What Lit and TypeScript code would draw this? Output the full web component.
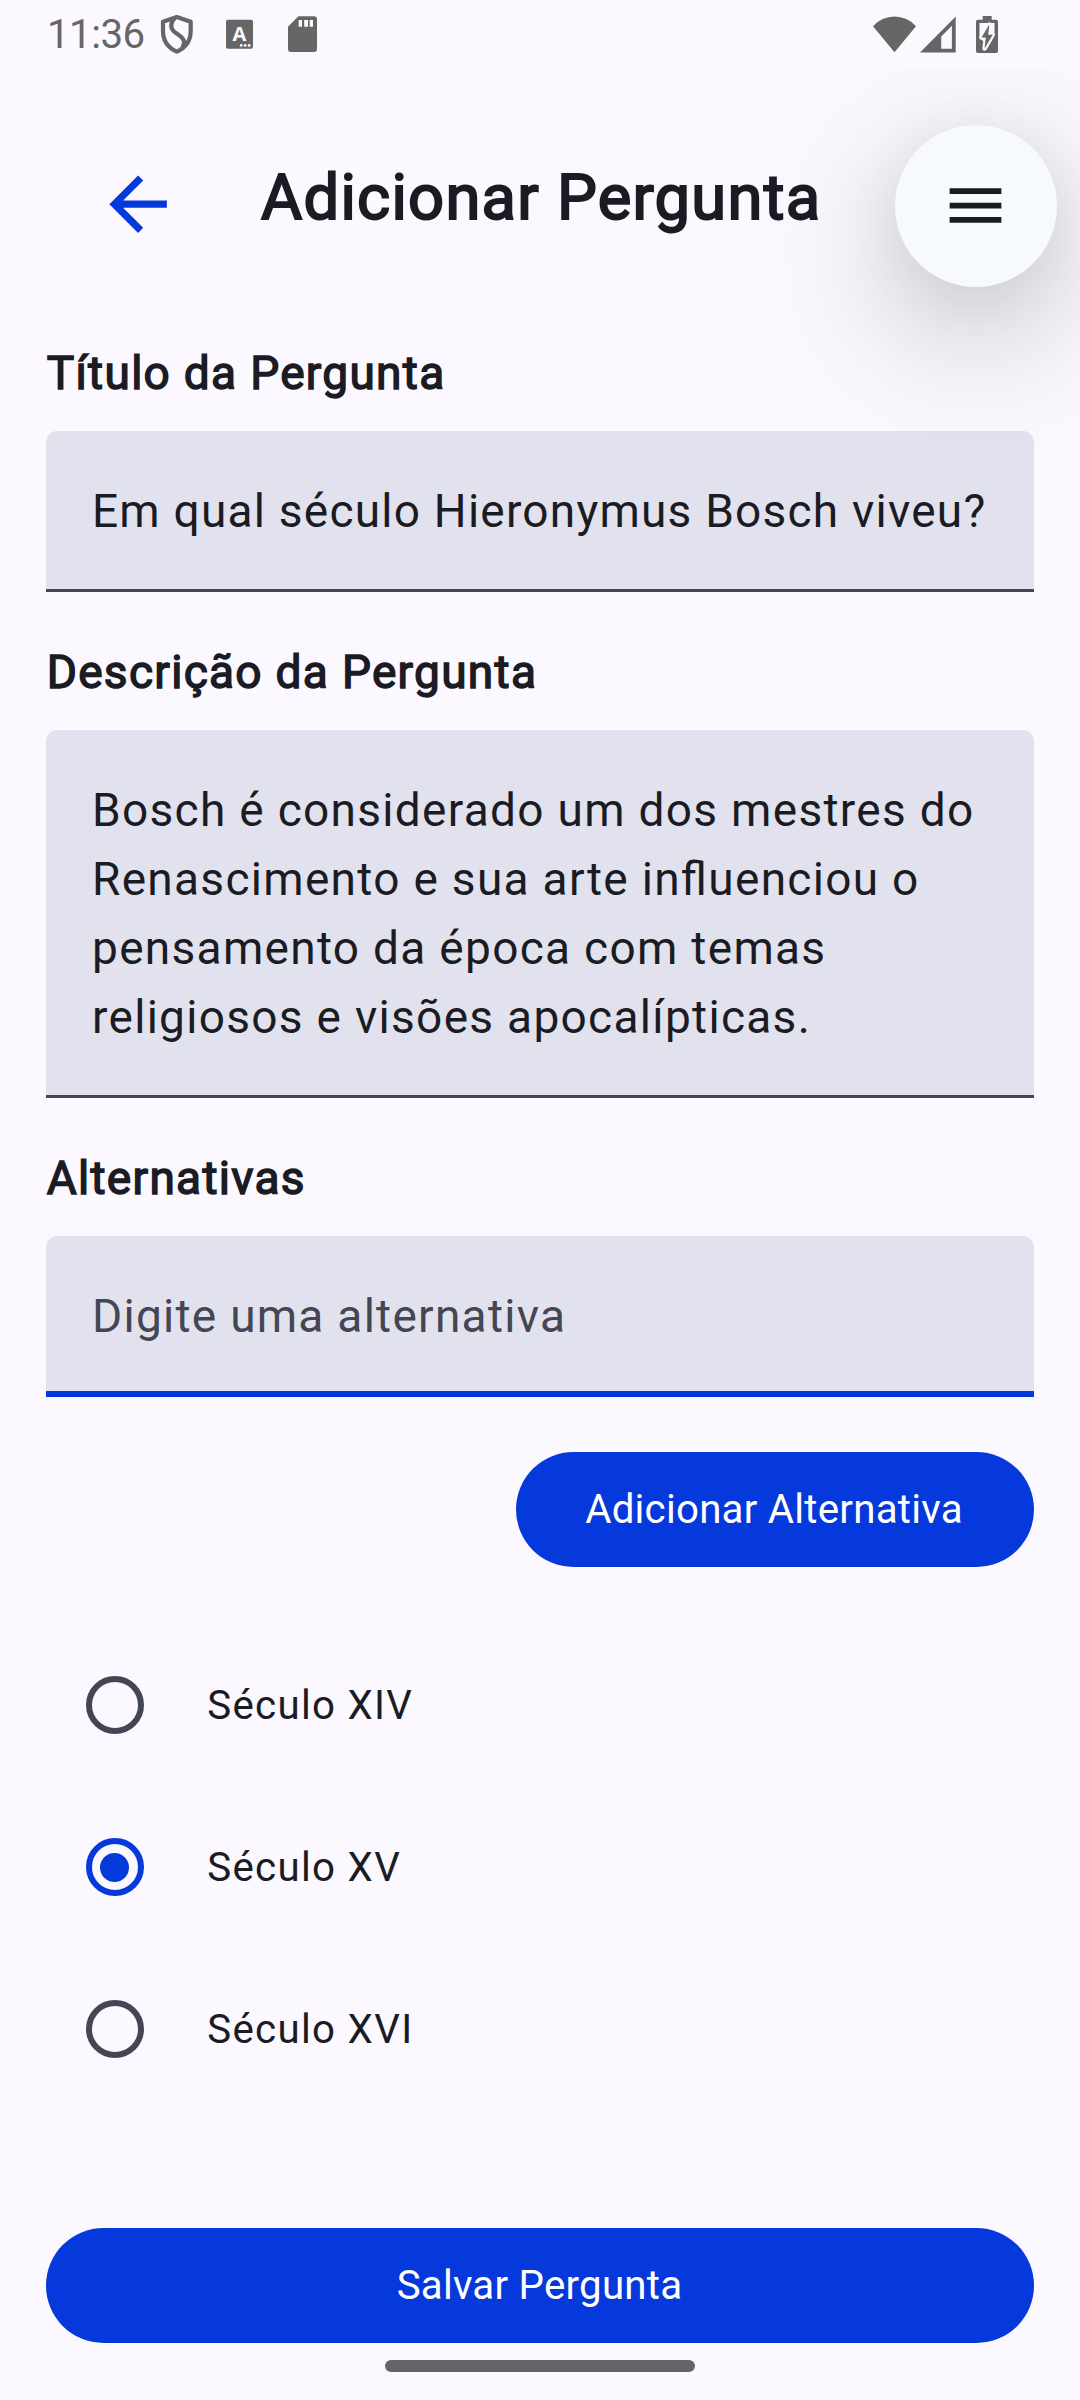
import { LitElement, html, css } from "lit";
import { customElement, state } from "lit/decorators.js";
import { classMap } from "lit/directives/class-map.js";

@customElement("app-root")
export class AppRoot extends LitElement {
  @state() private selected = 1;
  private options = ["Século XIV", "Século XV", "Século XVI"];

  static styles = css`
    :host {
      display: block;
      width: 1080px;
      height: 2400px;
      background: #fbf8ff;
      color: #1a1b23;
      font-family: Roboto, "Liberation Sans", sans-serif;
    }
    * { box-sizing: border-box; }
    svg { display: block; flex: none; }
    .screen { display: flex; flex-direction: column; height: 2400px; overflow: hidden; }

    .status { display: flex; height: 69px; flex: none; color: #666; }
    .clock { font-size: 40.25px; line-height: 47px; letter-spacing: -0.5px; padding: 11px 0 0 47px; width: 158px; flex: none; }
    .spacer { flex: 1; }
    .glyph { font: 700 20px "Open Sans", Roboto, sans-serif; }

    .app { display: flex; flex-direction: column; flex: 1; overflow: hidden; }
    .bar { display: flex; height: 247px; flex: none; position: relative; z-index: 1; }
    .back { width: 86.25px; height: 86.25px; margin: 91.5px 0 0 95px; color: #0639db; }
    .title {
      margin: 88px 0 0 79.75px;
      width: 634px;
      flex: none;
      font-size: 63.25px;
      line-height: 80px;
      letter-spacing: 1.26px;
      -webkit-text-stroke: 2px currentColor;
      white-space: nowrap;
    }
    .menu {
      flex: none;
      width: 162px;
      height: 162px;
      border-radius: 50%;
      margin-top: 56px;
      background: #f6fafe;
      color: #171d1e;
      display: flex;
      align-items: center;
      justify-content: center;
      padding: 0 1px 1px 0;
      box-shadow: 0 42px 140px 4px rgba(0, 0, 0, 0.23), 0 10px 60px rgba(0, 0, 0, 0.06);
    }
    .menu svg { width: 69px; height: 69px; }

    .form { display: flex; flex-direction: column; padding: 0 46px; flex: 1; }
    .label {
      flex: none;
      font-size: 46px;
      line-height: 69px;
      letter-spacing: 1.3px;
      -webkit-text-stroke: 1.44px currentColor;
      margin: 23px 0;
      padding-left: 0.7px;
    }
    .field {
      flex: none;
      background: #e1e2ed;
      border-radius: 11.5px 11.5px 0 0;
      box-shadow: inset 0 -3px #464756;
      padding: 46px;
      font-size: 46px;
      line-height: 69px;
      letter-spacing: 1.3px;
      font-feature-settings: "liga" 1;
      margin-bottom: 23px;
      white-space: pre-line;
    }
    .single { letter-spacing: 1.23px; white-space: nowrap; }
    .focused { box-shadow: inset 0 -6px #0639db; color: #444654; margin-bottom: 55px; letter-spacing: 1.27px; }
    .button {
      flex: none;
      display: flex;
      align-items: center;
      justify-content: center;
      height: 115px;
      border-radius: 57.5px;
      background: #0639db;
      color: #fff;
      font-size: 40.25px;
      letter-spacing: 0.24px;
    }
    .add { align-self: flex-end; width: 518px; margin-bottom: 57px; padding-right: 2px; }
    .option {
      flex: none;
      display: flex;
      align-items: center;
      height: 162px;
      padding-left: 40px;
      gap: 63.25px;
      font-size: 40.25px;
      letter-spacing: 1.29px;
    }
    .radio {
      width: 58px;
      height: 58px;
      border-radius: 50%;
      border: 6px solid #444654;
      display: flex;
      align-items: center;
      justify-content: center;
    }
    .radio.on { border-color: #0639db; }
    .dot { width: 29px; height: 29px; margin-right: 1px; border-radius: 50%; background: #0639db; }
    .save { margin-top: auto; padding-right: 1px; }
    .home { flex: none; align-self: center; width: 310px; height: 12px; border-radius: 6px; background: #656567; margin: 17px 0 28px; }
  `;

  private renderStatus() {
    return html`<div class="status">
      <div class="clock">11:36</div>
      <svg width="170" height="69" viewBox="158 0 170 69" fill="currentColor">
        <g fill="none" stroke="currentColor" stroke-width="4.200" stroke-linejoin="round">
          <path d="M176.800 17L190.700 21.800V31C190.700 40 186 47.500 176.800 51.700C167.500 47.500 163 40 163 31V21.800Z" />
          <path d="M175 18C170.500 22 170 28 174 31.500C178 35 184 37 184 42C184 44 183.500 45.500 182.500 47.500" />
        </g>
        <rect x="226" y="19.700" width="27" height="29" rx="2" />
        <text class="glyph" x="239.400" y="41" text-anchor="middle" fill="#fbf8ff">A</text>
        <g fill="#fbf8ff">
          <circle cx="241.200" cy="45.400" r="1.400" />
          <circle cx="245.200" cy="45.400" r="1.400" />
          <circle cx="249.200" cy="45.400" r="1.400" />
        </g>
        <path d="M298.500 16.300H314A3 3 0 0 1 317 19.300V49A3 3 0 0 1 314 52H291A3 3 0 0 1 288 49V26.700Z" />
        <path fill="#fbf8ff" d="M298.700 20H302V26.700H298.700ZM304.200 20H308V26.700H304.200ZM309.700 20H313V26.700H309.700Z" />
      </svg>
      <div class="spacer"></div>
      <svg width="210" height="69" viewBox="870 0 210 69" fill="currentColor">
        <path d="M873 26.200A28.700 28.700 0 0 1 916 26.200L894.500 52.300Z" />
        <path fill-rule="evenodd" d="M955.700 16.500V52.500H920ZM951.900 25.700L941.200 36.500V48.800H951.900Z" />
        <path d="M982.700 16H991.700V19.700H996A2 2 0 0 1 998 21.700V51A2 2 0 0 1 996 53H978A2 2 0 0 1 976 51V21.700A2 2 0 0 1 978 19.700H982.700Z" />
        <path fill="#fbf8ff" d="M979.500 23H994.500V34.500L991 41L988 40L983 41L979.500 38Z" />
        <path stroke="#fbf8ff" stroke-width="4.500" stroke-linejoin="round" paint-order="stroke" d="M989.300 24.500L981.500 37.500H985.800L984.600 48.500L992.700 34.800H988.200Z" />
      </svg>
    </div>`;
  }

  private renderOption(label: string, index: number) {
    const on = index === this.selected;
    return html`<div class="option" @click=${() => (this.selected = index)}>
      <div class=${classMap({ radio: true, on })}>${on ? html`<div class="dot"></div>` : null}</div>
      <span>${label}</span>
    </div>`;
  }

  render() {
    return html`<div class="screen">
      ${this.renderStatus()}
      <div class="app">
        <div class="bar">
          <svg class="back" viewBox="0 0 24 24" fill="currentColor"><path d="M20 11H7.830l5.590-5.590L12 4l-8 8 8 8 1.410-1.410L7.830 13H20z" /></svg>
          <div class="title">Adicionar Pergunta</div>
          <div class="menu"><svg viewBox="0 0 24 24" fill="currentColor"><path d="M3 18h18v-2H3zm0-5h18v-2H3zm0-7v2h18V6z" /></svg></div>
        </div>
        <div class="form">
          <div class="label">Título da Pergunta</div>
          <div class="field single">Em qual século Hieronymus Bosch viveu?</div>
          <div class="label">Descrição da Pergunta</div>
          <div class="field">Bosch é considerado um dos mestres do<br />Renascimento e sua arte influenciou o<br />pensamento da época com temas<br />religiosos e visões apocalípticas.</div>
          <div class="label">Alternativas</div>
          <div class="field focused">Digite uma alternativa</div>
          <div class="button add">Adicionar Alternativa</div>
          ${this.options.map((o, i) => this.renderOption(o, i))}
          <div class="button save">Salvar Pergunta</div>
        </div>
        <div class="home"></div>
      </div>
    </div>`;
  }
}
